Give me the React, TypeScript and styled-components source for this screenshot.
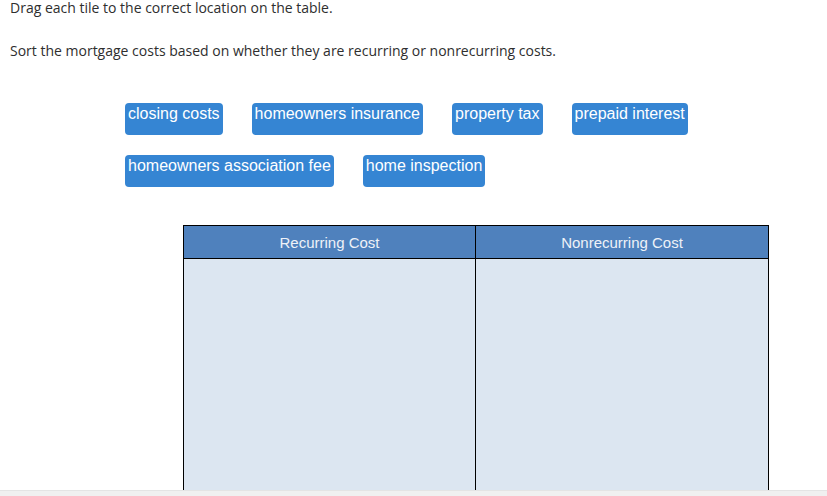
import React from "react";
import styled, { createGlobalStyle } from "styled-components";

type Column = {
  title: string;
};

const tiles: string[] = [
  "closing costs",
  "homeowners insurance",
  "property tax",
  "prepaid interest",
  "homeowners association fee",
  "home inspection",
];

const columns: Column[] = [{ title: "Recurring Cost" }, { title: "Nonrecurring Cost" }];

const GlobalStyle = createGlobalStyle`
  html, body {
    margin: 0;
    padding: 0;
    overflow: hidden;
    background: #ffffff;
  }
`;

const App: React.FC = () => {
  return (
    <>
      <GlobalStyle />
      <Page>
        <Instruction>Drag each tile to the correct location on the table.</Instruction>
        <Prompt>Sort the mortgage costs based on whether they are recurring or nonrecurring costs.</Prompt>
        <TileBank>
          {tiles.map((tile) => (
            <Tile key={tile}>{tile}</Tile>
          ))}
        </TileBank>
        <Board>
          {columns.map((col) => (
            <HeaderCell key={col.title}>{col.title}</HeaderCell>
          ))}
          {columns.map((col) => (
            <DropCell key={col.title + "-drop"} />
          ))}
        </Board>
      </Page>
      <BottomBar />
    </>
  );
};

const Page = styled.div`
  padding: 0 10px;
  font-family: "Open Sans", "Liberation Sans", sans-serif;
  color: #2e2e2e;
`;

const Instruction = styled.p`
  margin: -2px 0 0;
  font-size: 14px;
  line-height: 19px;
`;

const Prompt = styled.p`
  margin: 24px 0 0;
  font-size: 14px;
  line-height: 19px;
`;

const TileBank = styled.div`
  display: flex;
  flex-wrap: wrap;
  width: 600px;
  margin: 43px 0 0 115px;
  column-gap: 29px;
  row-gap: 20px;
`;

const Tile = styled.div`
  box-sizing: border-box;
  height: 32px;
  padding: 2px 3px 0;
  border-radius: 4px;
  background: #3585d3;
  color: #ffffff;
  font-family: "Liberation Sans", Arial, sans-serif;
  font-size: 16px;
  line-height: 18px;
  white-space: nowrap;
`;

const Board = styled.div`
  display: grid;
  grid-template-columns: 291px 292px;
  grid-template-rows: 32px 240px;
  gap: 1px;
  width: 584px;
  margin: 38px 0 0 173px;
  border: 1px solid #000000;
  background: #000000;
`;

const HeaderCell = styled.div`
  display: flex;
  align-items: center;
  justify-content: center;
  background: #4f81bd;
  color: #eef2f8;
  font-family: "Liberation Sans", Arial, sans-serif;
  font-size: 15px;
`;

const DropCell = styled.div`
  background: #dce6f1;
`;

const BottomBar = styled.div`
  position: fixed;
  left: 0;
  right: 0;
  bottom: 0;
  height: 5px;
  background: #f0f0f0;
  border-top: 1px solid #e4e4e4;
`;

export default App;
